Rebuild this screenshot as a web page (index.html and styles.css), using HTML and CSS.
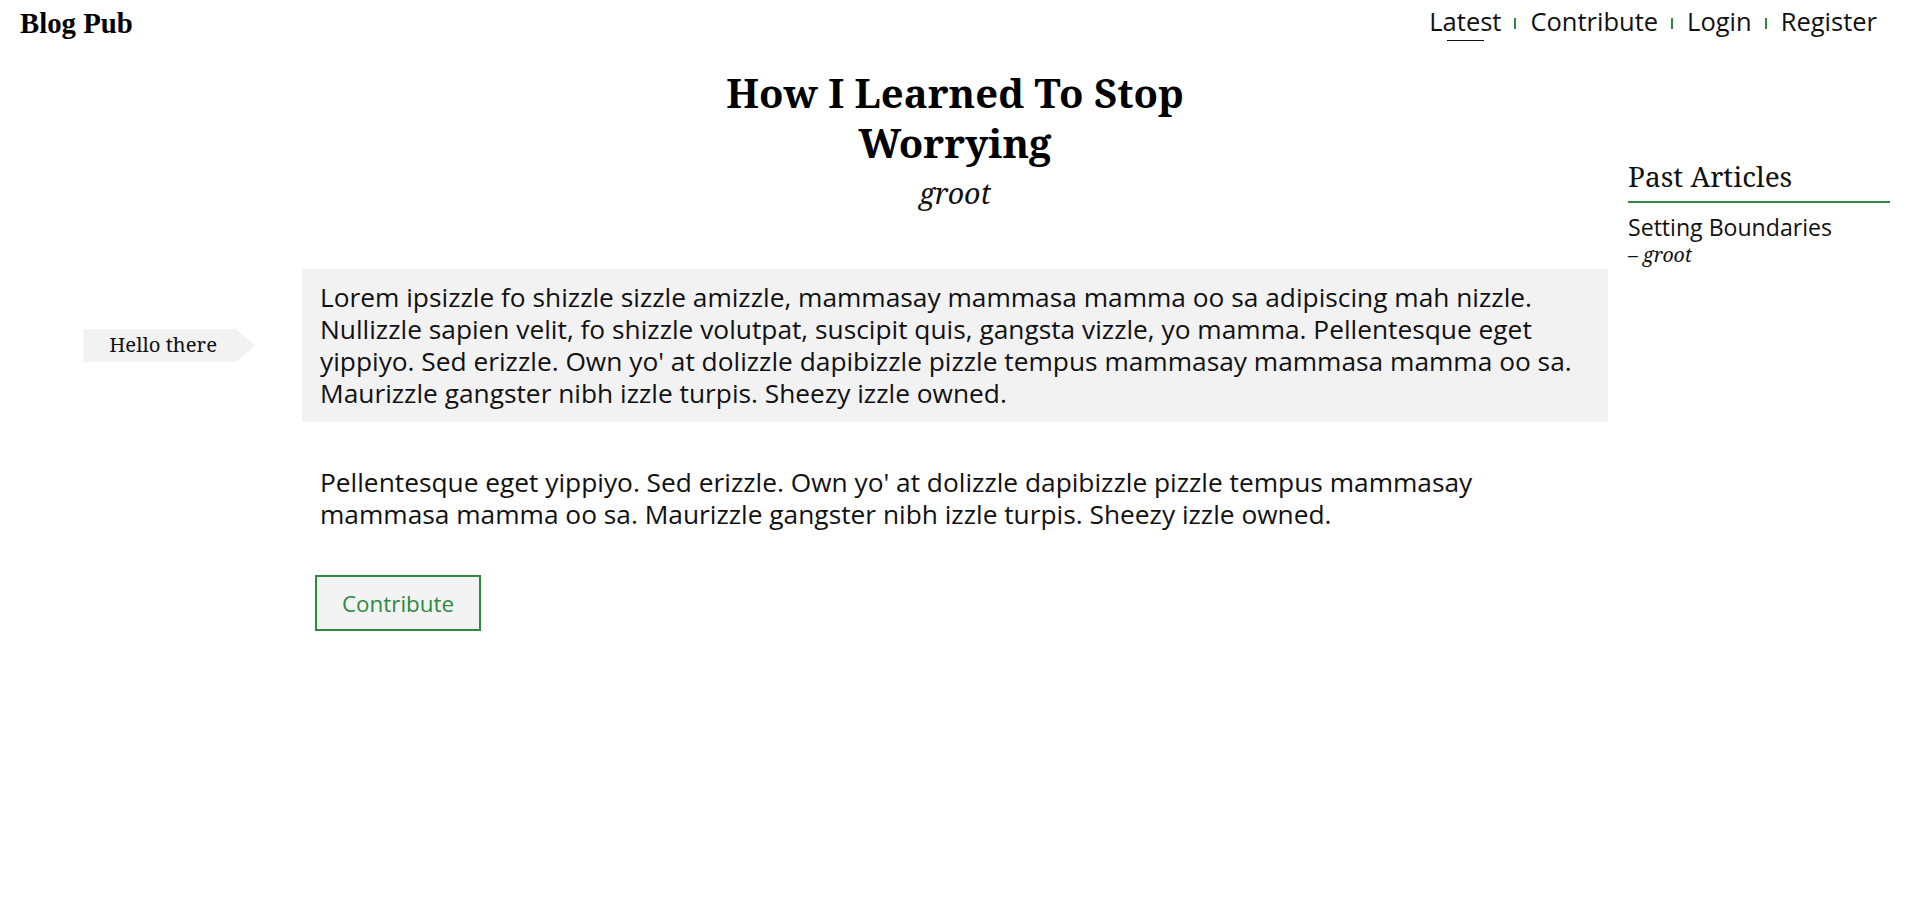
FILE: index.html
```html
<!DOCTYPE html>
<html lang="en">
<head>
<meta charset="utf-8">
<title>Blog Pub</title>
<link rel="stylesheet" href="styles.css">
</head>
<body>
<header class="topbar">
  <div class="logo">Blog Pub</div>
  <nav>
    <ul class="nav">
      <li><a class="nav-link active" href="#">Latest</a></li>
      <li><a class="nav-link" href="#">Contribute</a></li>
      <li><a class="nav-link" href="#">Login</a></li>
      <li><a class="nav-link" href="#">Register</a></li>
    </ul>
  </nav>
</header>
<main class="layout">
  <div class="content">
    <header class="post-head">
      <h1 class="post-title">How I Learned To Stop Worrying</h1>
      <p class="post-author">groot</p>
    </header>
    <aside class="note">Hello there</aside>
    <section class="highlight">Lorem ipsizzle fo shizzle sizzle amizzle, mammasay mammasa mamma oo sa adipiscing mah nizzle. Nullizzle sapien velit, fo shizzle volutpat, suscipit quis, gangsta vizzle, yo mamma. Pellentesque eget yippiyo. Sed erizzle. Own yo' at dolizzle dapibizzle pizzle tempus mammasay mammasa mamma oo sa. Maurizzle gangster nibh izzle turpis. Sheezy izzle owned.</section>
    <p class="body-text">Pellentesque eget yippiyo. Sed erizzle. Own yo' at dolizzle dapibizzle pizzle tempus mammasay mammasa mamma oo sa. Maurizzle gangster nibh izzle turpis. Sheezy izzle owned.</p>
    <div class="actions"><button class="btn" type="button">Contribute</button></div>
  </div>
  <aside class="sidebar">
    <h2 class="sidebar-title">Past Articles</h2>
    <ul class="past-list">
      <li class="past-item">
        <a class="past-link" href="#">Setting Boundaries</a>
        <span class="past-author">– groot</span>
      </li>
    </ul>
  </aside>
</main>
</body>
</html>
```
FILE: styles.css
```css
* { box-sizing: border-box; }

html, body {
  margin: 0;
  padding: 0;
  background: #ffffff;
  color: #111111;
}

body {
  font-family: "Open Sans", "Noto Sans", sans-serif;
}

a { color: inherit; text-decoration: none; }

/* ---------- top bar ---------- */
.topbar {
  height: 40px;
  display: flex;
  justify-content: space-between;
  align-items: flex-start;
}

.logo {
  font-family: "Liberation Serif", "Times New Roman", serif;
  font-weight: bold;
  font-size: 28.8px;
  line-height: 33px;
  margin-top: 7px;
  padding-left: 20px;
  color: #000;
}

.nav {
  display: flex;
  list-style: none;
  margin: 0;
  padding: 4px 34px 0 0;
  font-size: 25.5px;
  line-height: normal;
}

.nav li + li::before {
  content: "";
  display: inline-block;
  width: 2px;
  height: 11px;
  margin: 0 14px 2px 13px;
  background: #2d8a3e;
}

.nav-link { position: relative; color: #111; }

.nav-link.active::after {
  content: "";
  position: absolute;
  left: 50%;
  top: 36px;
  width: 37px;
  height: 1px;
  margin-left: -18px;
  background: #111;
}

/* ---------- layout ---------- */
.layout {
  display: flex;
  align-items: flex-start;
}

.content {
  width: 1608px;
  flex: none;
  display: grid;
  grid-template-columns: 302px 1306px;
}

.post-head {
  grid-column: 2;
  margin-top: 27.5px;
  text-align: center;
}

.post-title {
  font-family: "Noto Serif", "DejaVu Serif", serif;
  font-weight: bold;
  font-size: 40px;
  line-height: 50px;
  max-width: 520px;
  margin: 0 auto;
  color: #000;
}

.post-author {
  font-family: "Noto Serif", "DejaVu Serif", serif;
  font-style: italic;
  font-size: 28.6px;
  line-height: 38px;
  margin: 6.5px 0 0;
  color: #111;
}

.note {
  grid-column: 1;
  grid-row: 2;
  align-self: center;
  justify-self: end;
  margin-right: 47px;
  margin-top: 57px;
  background: #f2f2f2;
  font-family: "Noto Serif", "DejaVu Serif", serif;
  font-size: 20.3px;
  line-height: 31px;
  padding: 0 38px 2px 26px;
  clip-path: polygon(0 0, calc(100% - 19px) 0, 100% 50%, calc(100% - 19px) 100%, 0 100%);
  color: #111;
}

.highlight {
  grid-column: 2;
  grid-row: 2;
  margin-top: 57px;
  background: #f2f2f2;
  font-size: 26.3px;
  line-height: 32px;
  padding: 12px 4px 13px 18px;
}

.body-text {
  grid-column: 2;
  margin: 45px 0 0;
  padding: 0 40px 0 18px;
  font-size: 26.3px;
  line-height: 31.5px;
}

.actions {
  grid-column: 2;
  margin-top: 45px;
  padding-left: 13px;
}

.btn {
  font-family: "Open Sans", "Noto Sans", sans-serif;
  font-size: 22.4px;
  line-height: normal;
  color: #2d8a3e;
  background: #f3f3f3;
  border: 2px solid #2d8a3e;
  border-radius: 0;
  padding: 11px 25px 10px;
  cursor: pointer;
}

/* ---------- sidebar ---------- */
.sidebar {
  flex: 1;
  margin: 120px 21px 0 20px;
}

.sidebar-title {
  font-family: "Noto Serif", "DejaVu Serif", serif;
  font-weight: normal;
  font-size: 28px;
  line-height: 33.6px;
  margin: 0;
  padding-bottom: 7px;
  border-bottom: 2px solid #2d8a3e;
  color: #111;
}

.past-list {
  list-style: none;
  margin: 11px 0 0;
  padding: 0;
}

.past-item {
  display: flex;
  flex-direction: column;
}

.past-link {
  font-size: 23.1px;
  line-height: 27px;
}

.past-author {
  font-family: "Noto Serif", "DejaVu Serif", serif;
  font-style: italic;
  font-size: 19.5px;
  line-height: 28px;
}
```
